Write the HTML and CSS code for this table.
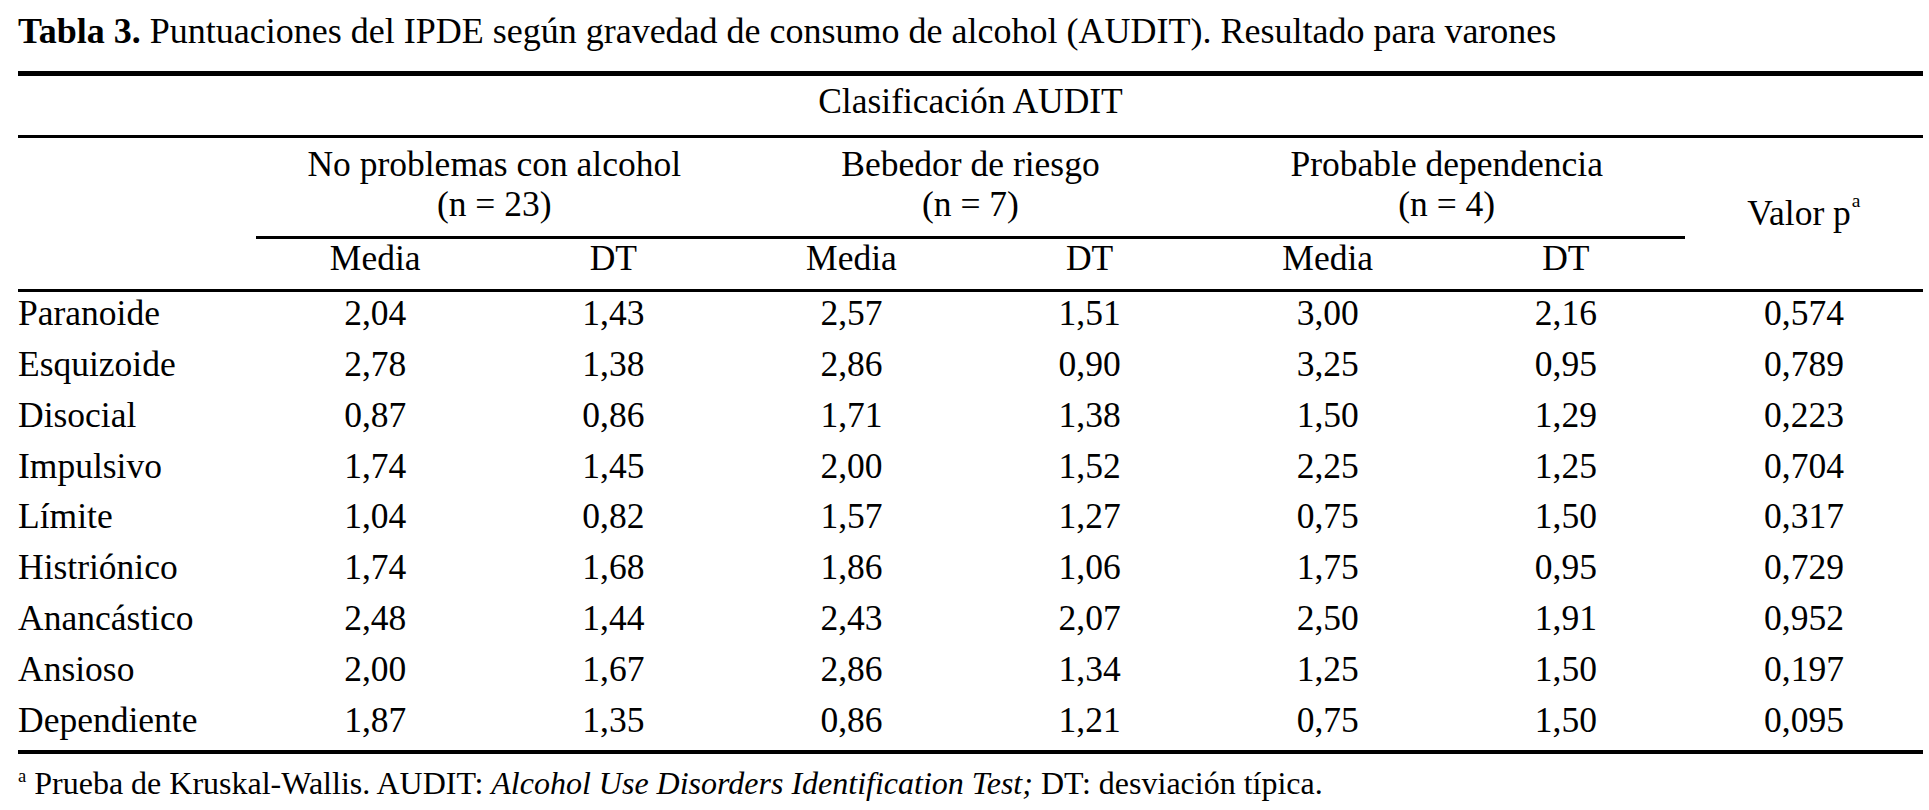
FILE: index.html
```html
<!DOCTYPE html>
<html lang="es">
<head>
<meta charset="utf-8">
<title>Tabla 3</title>
<link rel="stylesheet" href="styles.css">
</head>
<body>
<div class="page">
  <p class="title"><b>Tabla 3.</b> Puntuaciones del IPDE según gravedad de consumo de alcohol (AUDIT). Resultado para varones</p>
  <div class="table">
    <div class="audit">Clasificación AUDIT</div>

    <div class="corner"></div>
    <div class="group">No problemas con alcohol<br>(n = 23)</div>
    <div class="group">Bebedor de riesgo<br>(n = 7)</div>
    <div class="group">Probable dependencia<br>(n = 4)</div>
    <div class="pval">Valor p<sup>a</sup></div>

    <div class="sub">Media</div><div class="sub">DT</div>
    <div class="sub">Media</div><div class="sub">DT</div>
    <div class="sub">Media</div><div class="sub">DT</div>

    <div class="lab">Paranoide</div><div class="num">2,04</div><div class="num">1,43</div><div class="num">2,57</div><div class="num">1,51</div><div class="num">3,00</div><div class="num">2,16</div><div class="num">0,574</div>
    <div class="lab">Esquizoide</div><div class="num">2,78</div><div class="num">1,38</div><div class="num">2,86</div><div class="num">0,90</div><div class="num">3,25</div><div class="num">0,95</div><div class="num">0,789</div>
    <div class="lab">Disocial</div><div class="num">0,87</div><div class="num">0,86</div><div class="num">1,71</div><div class="num">1,38</div><div class="num">1,50</div><div class="num">1,29</div><div class="num">0,223</div>
    <div class="lab">Impulsivo</div><div class="num">1,74</div><div class="num">1,45</div><div class="num">2,00</div><div class="num">1,52</div><div class="num">2,25</div><div class="num">1,25</div><div class="num">0,704</div>
    <div class="lab">Límite</div><div class="num">1,04</div><div class="num">0,82</div><div class="num">1,57</div><div class="num">1,27</div><div class="num">0,75</div><div class="num">1,50</div><div class="num">0,317</div>
    <div class="lab">Histriónico</div><div class="num">1,74</div><div class="num">1,68</div><div class="num">1,86</div><div class="num">1,06</div><div class="num">1,75</div><div class="num">0,95</div><div class="num">0,729</div>
    <div class="lab">Anancástico</div><div class="num">2,48</div><div class="num">1,44</div><div class="num">2,43</div><div class="num">2,07</div><div class="num">2,50</div><div class="num">1,91</div><div class="num">0,952</div>
    <div class="lab">Ansioso</div><div class="num">2,00</div><div class="num">1,67</div><div class="num">2,86</div><div class="num">1,34</div><div class="num">1,25</div><div class="num">1,50</div><div class="num">0,197</div>
    <div class="lab">Dependiente</div><div class="num">1,87</div><div class="num">1,35</div><div class="num">0,86</div><div class="num">1,21</div><div class="num">0,75</div><div class="num">1,50</div><div class="num">0,095</div>
  </div>
  <p class="note"><sup>a</sup> Prueba de Kruskal-Wallis. AUDIT: <i>Alcohol Use Disorders Identification Test;</i> DT: desviación típica.</p>
</div>
</body>
</html>
```

FILE: styles.css
```css
html, body {
  margin: 0;
  padding: 0;
  background: #fff;
}

body {
  font-family: "Liberation Serif", "Times New Roman", serif;
  color: #000;
}

.page {
  padding-left: 18px;
  width: 1905px;
}

.title {
  margin: 11px 0 20px;
  font-size: 36px;
  line-height: 40px;
  white-space: nowrap;
}

.title b {
  font-weight: bold;
}

.table {
  display: grid;
  grid-template-columns: repeat(8, 1fr);
  border-top: 5px solid #000;
  border-bottom: 4px solid #000;
  font-size: 35.5px;
  line-height: 36px;
}

.audit {
  grid-column: 1 / -1;
  text-align: center;
  padding: 7px 0 16px;
  border-bottom: 3px solid #000;
}

.corner {
  grid-column: 1;
  grid-row: 2 / 4;
  border-bottom: 3px solid #000;
}

.group {
  grid-column: span 2;
  grid-row: 2;
  text-align: center;
  line-height: 39.5px;
  padding: 7px 0 12px;
  border-bottom: 3px solid #000;
}

.pval {
  grid-column: 8;
  grid-row: 2 / 4;
  display: flex;
  align-items: center;
  justify-content: center;
  padding-bottom: 2px;
  border-bottom: 3px solid #000;
}

.pval sup,
.note sup {
  vertical-align: 0;
  position: relative;
  line-height: 0;
}

.pval sup {
  font-size: 0.55em;
  top: -0.6em;
  margin-left: 1px;
}

.sub {
  grid-row: 3;
  text-align: center;
  padding: 1px 0 13px;
  border-bottom: 3px solid #000;
}

.lab,
.num {
  box-sizing: border-box;
  height: 50.85px;
  padding-top: 3px;
  white-space: nowrap;
}

.lab {
  text-align: left;
}

.num {
  text-align: center;
}

.note {
  margin: 11px 0 0;
  font-size: 32px;
  line-height: 36px;
  white-space: nowrap;
}

.note sup {
  top: -0.6em;
  font-size: 0.58em;
}
```
